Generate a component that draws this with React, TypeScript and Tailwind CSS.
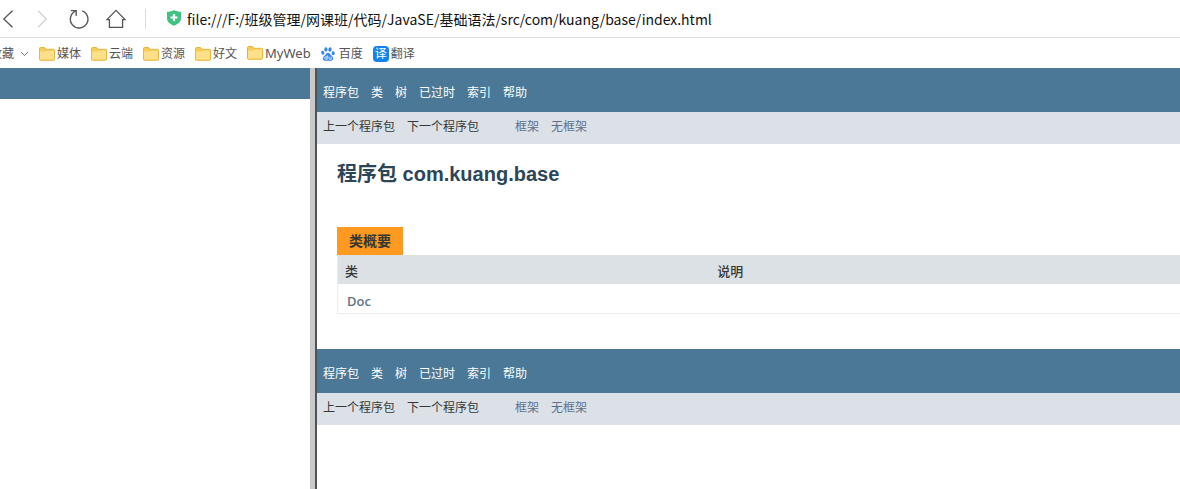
import React from "react";

const folders = ["媒体", "云端", "资源", "好文"];
const sections = ["程序包", "类", "树", "已过时", "索引", "帮助"];

function FolderIcon() {
  return (
    <svg width="16" height="14" viewBox="0 0 16 14" aria-hidden="true">
      <path d="M.5 1.500a1 1 0 0 1 1-1h4l1.500 1.800h7.500a1 1 0 0 1 1 1v9a1 1 0 0 1-1 1h-13a1 1 0 0 1-1-1z" fill="#f8cb55" stroke="#e9b53c" />
      <path d="M1 4.600h5.200l1.200-1.200H15v9.100H1z" fill="#ffe08a" />
    </svg>
  );
}

function PawIcon() {
  return (
    <svg width="14" height="14" viewBox="0 0 14 14" fill="#3385f0" aria-hidden="true">
      <ellipse cx="4.9" cy="2.4" rx="1.6" ry="2.2" />
      <ellipse cx="9" cy="2.5" rx="1.6" ry="2.2" transform="rotate(10 9 2.5)" />
      <ellipse cx="1.8" cy="5.8" rx="1.5" ry="2" transform="rotate(-12 1.8 5.8)" />
      <ellipse cx="12.2" cy="6.2" rx="1.5" ry="2" />
      <path d="M7 5.7c1.6 0 2.1 1.5 3.1 2.5 1.2 1.1 2.4 2 2 3.7-.4 2.2-2.8 2-5.1 1.8-2.3.3-4.8.4-5.1-1.8-.2-1.8 1-2.6 2.1-3.7C5 7.2 5.4 5.7 7 5.7z" />
      <path d="M6.2 8.300v4H4.800c-1.600 0-1.600-2.400 0-2.400h1.400M8 9.600v2c0 .5.3.7.8.7h1.400V9.600" fill="none" stroke="#fff" strokeWidth=".8" />
    </svg>
  );
}

function Toolbar() {
  return (
    <header className="flex h-[38px] items-center border-b border-[#dedfe1]">
      <button type="button" aria-label="后退" className="w-7">
        <svg width="16" height="20" viewBox="0 0 16 20" fill="none" stroke="#555" strokeWidth="1.3">
          <path d="M12.500 1.800 3.800 10l8.700 8.200" />
        </svg>
      </button>
      <button type="button" aria-label="前进" className="flex w-10 pl-1">
        <svg width="16" height="20" viewBox="0 0 16 20" fill="none" stroke="#d2d2d2" strokeWidth="1.3">
          <path d="m6 1.800 8.300 8.200L6 18.200" />
        </svg>
      </button>
      <button type="button" aria-label="刷新" className="w-9">
        <svg width="22" height="20" viewBox="0 0 22 20" fill="none" stroke="#555" strokeWidth="1.4">
          <path d="M14.200 1.900a8.800 8.800 0 1 1-6.800.3" />
          <path d="M2.800 1.600h5.400v5.200" />
        </svg>
      </button>
      <button type="button" aria-label="主页" className="w-[41px] pl-[2px]">
        <svg width="20" height="20" viewBox="0 0 20 20" fill="none" stroke="#555" strokeWidth="1.3">
          <path d="M3.400 10.600H1L10 1.400l9 9.200h-2.400v7.800H3.400z" />
        </svg>
      </button>
      <span className="h-5 w-px shrink-0 bg-[#dcdcdc]" />
      <svg className="mb-[2px] ml-5 shrink-0" width="16" height="16" viewBox="0 0 16 16" aria-hidden="true">
        <path d="M1 1.800C4 1.800 6 1 8 .2c2 .8 4 1.600 7 1.600v6.700c0 3.600-3.600 5.900-7 7.200-3.400-1.300-7-3.600-7-7.200z" fill="#3fc380" />
        <path d="M8 4v7M4.500 7.500h7" stroke="#fff" strokeWidth="2.200" />
      </svg>
      <input
        aria-label="地址"
        readOnly
        className="ml-[5px] min-w-0 flex-1 bg-transparent font-['Noto_Sans_CJK_SC',sans-serif] text-sm text-[#111] outline-none"
        defaultValue="file:///F:/班级管理/网课班/代码/JavaSE/基础语法/src/com/kuang/base/index.html"
      />
    </header>
  );
}

function Bookmarks() {
  return (
    <nav aria-label="书签" className="flex h-[30px] items-center gap-[10px] overflow-hidden whitespace-nowrap pt-px text-xs text-[#555]">
      <button type="button" className="-ml-[10px] flex items-center gap-[6px]">
        收藏
        <svg width="9" height="6" viewBox="0 0 9 6" fill="none" stroke="#777" aria-hidden="true">
          <path d="m1 1 3.500 3.500L8 1" />
        </svg>
      </button>
      {folders.map((name) => (
        <a key={name} href="#" className="flex items-center gap-[2px]">
          <FolderIcon />
          {name}
        </a>
      ))}
      <a href="#" className="flex items-center gap-[2px] text-[13px]">
        <FolderIcon />
        MyWeb
      </a>
      <a href="#" className="flex items-center gap-1">
        <PawIcon />
        百度
      </a>
      <a href="#" className="flex items-center gap-[2px]">
        <span className="flex size-4 items-center justify-center rounded-sm bg-[#1283ee] text-xs text-white">译</span>
        翻译
      </a>
    </nav>
  );
}

function DocNav() {
  return (
    <nav className="whitespace-nowrap text-xs">
      <div className="flex h-11 items-center gap-3 bg-[#4a7896] px-[6px] pt-[6px] text-white">
        {sections.map((name, i) =>
          i === 0 ? (
            <span key={name}>{name}</span>
          ) : (
            <a key={name} href="#">{name}</a>
          )
        )}
      </div>
      <div className="flex h-8 gap-9 bg-[#dce1e8] px-[6px] pt-[7px] text-[#353833]">
        <div className="flex gap-3">
          <span>上一个程序包</span>
          <span>下一个程序包</span>
        </div>
        <div className="flex gap-3 text-[#5d7088]">
          <a href="#">框架</a>
          <a href="#">无框架</a>
        </div>
      </div>
    </nav>
  );
}

export default function App() {
  return (
    <div className="flex min-h-screen flex-col bg-white font-['Noto_Sans','Noto_Sans_CJK_SC',sans-serif]">
      <Toolbar />
      <Bookmarks />
      <div className="flex flex-1">
        <aside className="w-[310px] shrink-0">
          <div className="h-[31px] bg-[#4a7896]" />
        </aside>
        <div className="w-[7px] shrink-0 border-r-2 border-[#505356] bg-[#c9c9c9]" />
        <main className="min-w-0 flex-1 text-[#353833]">
          <DocNav />
          <div className="pb-[35px] pl-5 pt-4">
            <h1 className="font-['Liberation_Sans','Noto_Sans_CJK_SC',sans-serif] text-xl font-bold leading-7 text-[#2c4557]">
              程序包 com.kuang.base
            </h1>
            <table className="mt-[39px] w-full border-b border-l border-[#ececec] text-left">
              <caption className="text-left text-sm font-bold leading-7">
                <span className="inline-block bg-[#ff991f] px-3">类概要</span>
              </caption>
              <thead className="bg-[#dce1e6] text-[13px]">
                <tr className="h-[29px]">
                  <th className="w-[44%] pl-[7px] pt-1 font-medium">类</th>
                  <th className="pl-[9px] pt-1 font-medium">说明</th>
                </tr>
              </thead>
              <tbody className="text-[13px]">
                <tr className="h-[29px]">
                  <td className="pl-[9px] pt-[6px]">
                    <a href="#" className="font-['Open_Sans',sans-serif] font-semibold text-[#5f7482]">Doc</a>
                  </td>
                  <td />
                </tr>
              </tbody>
            </table>
          </div>
          <DocNav />
        </main>
      </div>
    </div>
  );
}
